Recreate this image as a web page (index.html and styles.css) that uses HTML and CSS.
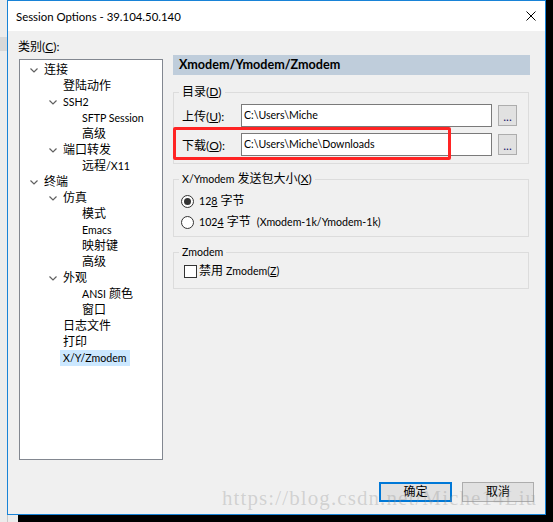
FILE: index.html
```html
<!DOCTYPE html>
<html lang="zh-CN">
<head>
    <meta charset="UTF-8">
    <title>Session Options - 39.104.50.140</title>
    <link rel="stylesheet" href="styles.css">
</head>
<body>

<div class="screen">
    <div class="left-strip"><div class="strip-shade"></div></div>

    <div class="window-col">
        <div class="window">
            <div class="titlebar">
                <span class="title">Session Options - 39.104.50.140</span>
                <svg class="close" width="10" height="10" viewBox="0 0 10 10">
                    <path d="M0.5 0.5 L9.5 9.5 M9.5 0.5 L0.5 9.5" stroke="#000" stroke-width="1" fill="none"/>
                </svg>
            </div>

            <div class="dialog-body">
                <div class="content">
                    <div class="category">
                        <div class="category-label">类别(<u>C</u>):</div>
                        <div class="tree">
                            <div class="tree-row lvl0"><span class="chev"><svg width="8" height="5" viewBox="0 0 8 5"><polyline points="0.5,0.5 4,4 7.5,0.5" fill="none" stroke="#606060" stroke-width="1.2"/></svg></span><span class="txt">连接</span></div>
                            <div class="tree-row lvl1"><span class="chev"></span><span class="txt">登陆动作</span></div>
                            <div class="tree-row lvl1"><span class="chev"><svg width="8" height="5" viewBox="0 0 8 5"><polyline points="0.5,0.5 4,4 7.5,0.5" fill="none" stroke="#606060" stroke-width="1.2"/></svg></span><span class="txt en">SSH2</span></div>
                            <div class="tree-row lvl2"><span class="chev"></span><span class="txt en">SFTP Session</span></div>
                            <div class="tree-row lvl2"><span class="chev"></span><span class="txt">高级</span></div>
                            <div class="tree-row lvl1"><span class="chev"><svg width="8" height="5" viewBox="0 0 8 5"><polyline points="0.5,0.5 4,4 7.5,0.5" fill="none" stroke="#606060" stroke-width="1.2"/></svg></span><span class="txt">端口转发</span></div>
                            <div class="tree-row lvl2"><span class="chev"></span><span class="txt">远程<span class="en">/X11</span></span></div>
                            <div class="tree-row lvl0"><span class="chev"><svg width="8" height="5" viewBox="0 0 8 5"><polyline points="0.5,0.5 4,4 7.5,0.5" fill="none" stroke="#606060" stroke-width="1.2"/></svg></span><span class="txt">终端</span></div>
                            <div class="tree-row lvl1"><span class="chev"><svg width="8" height="5" viewBox="0 0 8 5"><polyline points="0.5,0.5 4,4 7.5,0.5" fill="none" stroke="#606060" stroke-width="1.2"/></svg></span><span class="txt">仿真</span></div>
                            <div class="tree-row lvl2"><span class="chev"></span><span class="txt">模式</span></div>
                            <div class="tree-row lvl2"><span class="chev"></span><span class="txt en">Emacs</span></div>
                            <div class="tree-row lvl2"><span class="chev"></span><span class="txt">映射键</span></div>
                            <div class="tree-row lvl2"><span class="chev"></span><span class="txt">高级</span></div>
                            <div class="tree-row lvl1"><span class="chev"><svg width="8" height="5" viewBox="0 0 8 5"><polyline points="0.5,0.5 4,4 7.5,0.5" fill="none" stroke="#606060" stroke-width="1.2"/></svg></span><span class="txt">外观</span></div>
                            <div class="tree-row lvl2"><span class="chev"></span><span class="txt"><span class="en">ANSI</span> 颜色</span></div>
                            <div class="tree-row lvl2"><span class="chev"></span><span class="txt">窗口</span></div>
                            <div class="tree-row lvl1"><span class="chev"></span><span class="txt">日志文件</span></div>
                            <div class="tree-row lvl1"><span class="chev"></span><span class="txt">打印</span></div>
                            <div class="tree-row lvl1"><span class="chev"></span><span class="txt en selected">X/Y/Zmodem</span></div>
                        </div>
                    </div>

                    <div class="panel">
                        <div class="panel-head">Xmodem/Ymodem/Zmodem</div>

                        <fieldset class="group group-dirs">
                            <legend>目录(<u>D</u>)</legend>
                            <div class="field-row first">
                                <span class="field-label">上传(<u>U</u>):</span>
                                <div class="path">C:\Users\Miche</div>
                                <div class="browse">...</div>
                            </div>
                            <div class="field-row">
                                <span class="field-label">下载(<u>O</u>):</span>
                                <div class="path">C:\Users\Miche\Downloads</div>
                                <div class="browse">...</div>
                                <div class="highlight"></div>
                            </div>
                        </fieldset>

                        <fieldset class="group group-size">
                            <legend><span class="en">X/Ymodem</span> 发送包大小(<u>X</u>)</legend>
                            <div class="option first">
                                <span class="radio checked"></span>
                                <span><span class="en">12<u>8</u></span> 字节</span>
                            </div>
                            <div class="option">
                                <span class="radio"></span>
                                <span><span class="en">102<u>4</u></span> 字节&nbsp;&nbsp;<span class="en">(Xmodem-1k/Ymodem-1k)</span></span>
                            </div>
                        </fieldset>

                        <fieldset class="group group-z">
                            <legend><span class="en">Zmodem</span></legend>
                            <div class="option check-row">
                                <span class="checkbox"></span>
                                <span>禁用 <span class="en">Zmodem(<u>Z</u>)</span></span>
                            </div>
                        </fieldset>
                    </div>
                </div>

                <div class="actions">
                    <button class="btn btn-ok">确定</button>
                    <button class="btn">取消</button>
                </div>
            </div>
        </div>
        <div class="bottom-strip"><div class="grey"></div></div>
    </div>

    <div class="watermark">https://blog.csdn.net/Miche14Liu</div>
</div>

</body>
</html>
```

FILE: styles.css
```css
* {
    box-sizing: border-box;
}

body {
    margin: 0;
    background-color: #000;
    font-family: Lato, "Noto Sans CJK SC", sans-serif;
    font-size: 12px;
    color: #000;
}

.en {
    font-size: 10.6px;
}

.screen {
    position: relative;
    display: flex;
    width: 553px;
    height: 522px;
    overflow: hidden;
}

.left-strip {
    width: 7px;
    background-color: #ececec;
}

.strip-shade {
    margin-top: 37px;
    height: 14px;
    background-color: #d8d8d8;
}

.window-col {
    width: 539px;
    display: flex;
    flex-direction: column;
}

.window {
    height: 515px;
    border: 1px solid #1883d7;
    background-color: #f0f0f0;
    display: flex;
    flex-direction: column;
}

.bottom-strip {
    flex: 1;
}

.bottom-strip .grey {
    width: 11px;
    height: 100%;
    background-color: #ececec;
    border-left: 1px solid #c8c8c8;
}

.titlebar {
    height: 30px;
    background-color: #fff;
    display: flex;
    align-items: center;
    justify-content: space-between;
    padding: 0 9px 0 8px;
}

.title {
    font-size: 11.4px;
}

.dialog-body {
    flex: 1;
    display: flex;
    flex-direction: column;
    padding: 8px 11px 12px 11px;
}

.content {
    display: flex;
    gap: 10px;
}

.category {
    width: 144px;
}

.category-label {
    line-height: 16px;
    margin-left: -1px;
}

.tree {
    margin-top: 4px;
    height: 401px;
    background-color: #fff;
    border: 1px solid #828790;
    padding-top: 2px;
}

.tree-row {
    display: flex;
    align-items: center;
    height: 16px;
    line-height: 16px;
    white-space: nowrap;
}

.tree-row.lvl0 { padding-left: 10px; }
.tree-row.lvl1 { padding-left: 29px; }
.tree-row.lvl2 { padding-left: 48px; }

.chev {
    width: 14px;
    display: flex;
    align-items: center;
}

.txt.selected {
    background-color: #cce8ff;
    padding: 0 3px;
    margin-left: -3px;
}

.panel {
    width: 357px;
    margin-top: 16px;
}

.panel-head {
    height: 20px;
    line-height: 20px;
    background-color: #bfcddb;
    font-weight: bold;
    font-size: 12.6px;
    padding-left: 6px;
}

.group {
    margin: 10px 1px 0 0;
    border: 1px solid #dcdcdc;
    padding: 0 10px 7px 8px;
    min-width: 0;
}

.group legend {
    padding: 0 3px;
    margin-left: -3px;
    line-height: 14px;
}

.group-size,
.group-z {
    margin-top: 8px;
}

.field-row {
    position: relative;
    display: flex;
    align-items: center;
    height: 23px;
    margin-top: 6px;
}

.field-row.first {
    margin-top: 5px;
}

.field-label {
    width: 59px;
}

.path {
    width: 251px;
    height: 23px;
    line-height: 21px;
    border: 1px solid #7a7a7a;
    background-color: #fff;
    padding-left: 2px;
    font-size: 10.6px;
    white-space: nowrap;
}

.browse {
    width: 19px;
    height: 21px;
    margin-left: 6px;
    background-color: #e1e1e1;
    border: 1px solid #adadad;
    color: #1a1a6e;
    text-align: center;
    line-height: 22px;
}

.highlight {
    position: absolute;
    left: -9px;
    top: -6px;
    width: 278px;
    height: 33px;
    border: 3px solid #ff2424;
    border-radius: 2px;
}

.option {
    display: flex;
    align-items: center;
    gap: 5px;
    height: 16px;
    line-height: 16px;
    margin-top: 5px;
    white-space: nowrap;
}

.option.first {
    margin-top: 7px;
}

.group-size {
    padding-bottom: 6px;
}

.radio {
    width: 13px;
    height: 13px;
    border: 1px solid #333;
    border-radius: 50%;
    background-color: #fff;
    margin-left: -1px;
    display: flex;
    align-items: center;
    justify-content: center;
}

.radio.checked::after {
    content: "";
    width: 7px;
    height: 7px;
    border-radius: 50%;
    background-color: #333;
}

.group-z {
    padding-bottom: 9px;
}

.check-row {
    margin-top: 4px;
    gap: 2px;
}

.checkbox {
    width: 13px;
    height: 13px;
    border: 1px solid #333;
    background-color: #fff;
    margin-left: 2px;
}

.actions {
    margin-top: auto;
    display: flex;
    justify-content: flex-end;
    gap: 10px;
}

.btn {
    width: 72px;
    height: 20px;
    padding: 0;
    background-color: #e1e1e1;
    border: 1px solid #adadad;
    font-family: Lato, "Noto Sans CJK SC", sans-serif;
    font-size: 12px;
    color: #000;
    line-height: 16px;
}

.btn-ok {
    width: 73px;
    border: 2px solid #0078d7;
}

.watermark {
    position: absolute;
    left: 222px;
    top: 486px;
    font-family: "Liberation Serif", serif;
    font-size: 21px;
    letter-spacing: 1.1px;
    color: rgba(150, 150, 150, 0.35);
    white-space: nowrap;
    pointer-events: none;
}
```
